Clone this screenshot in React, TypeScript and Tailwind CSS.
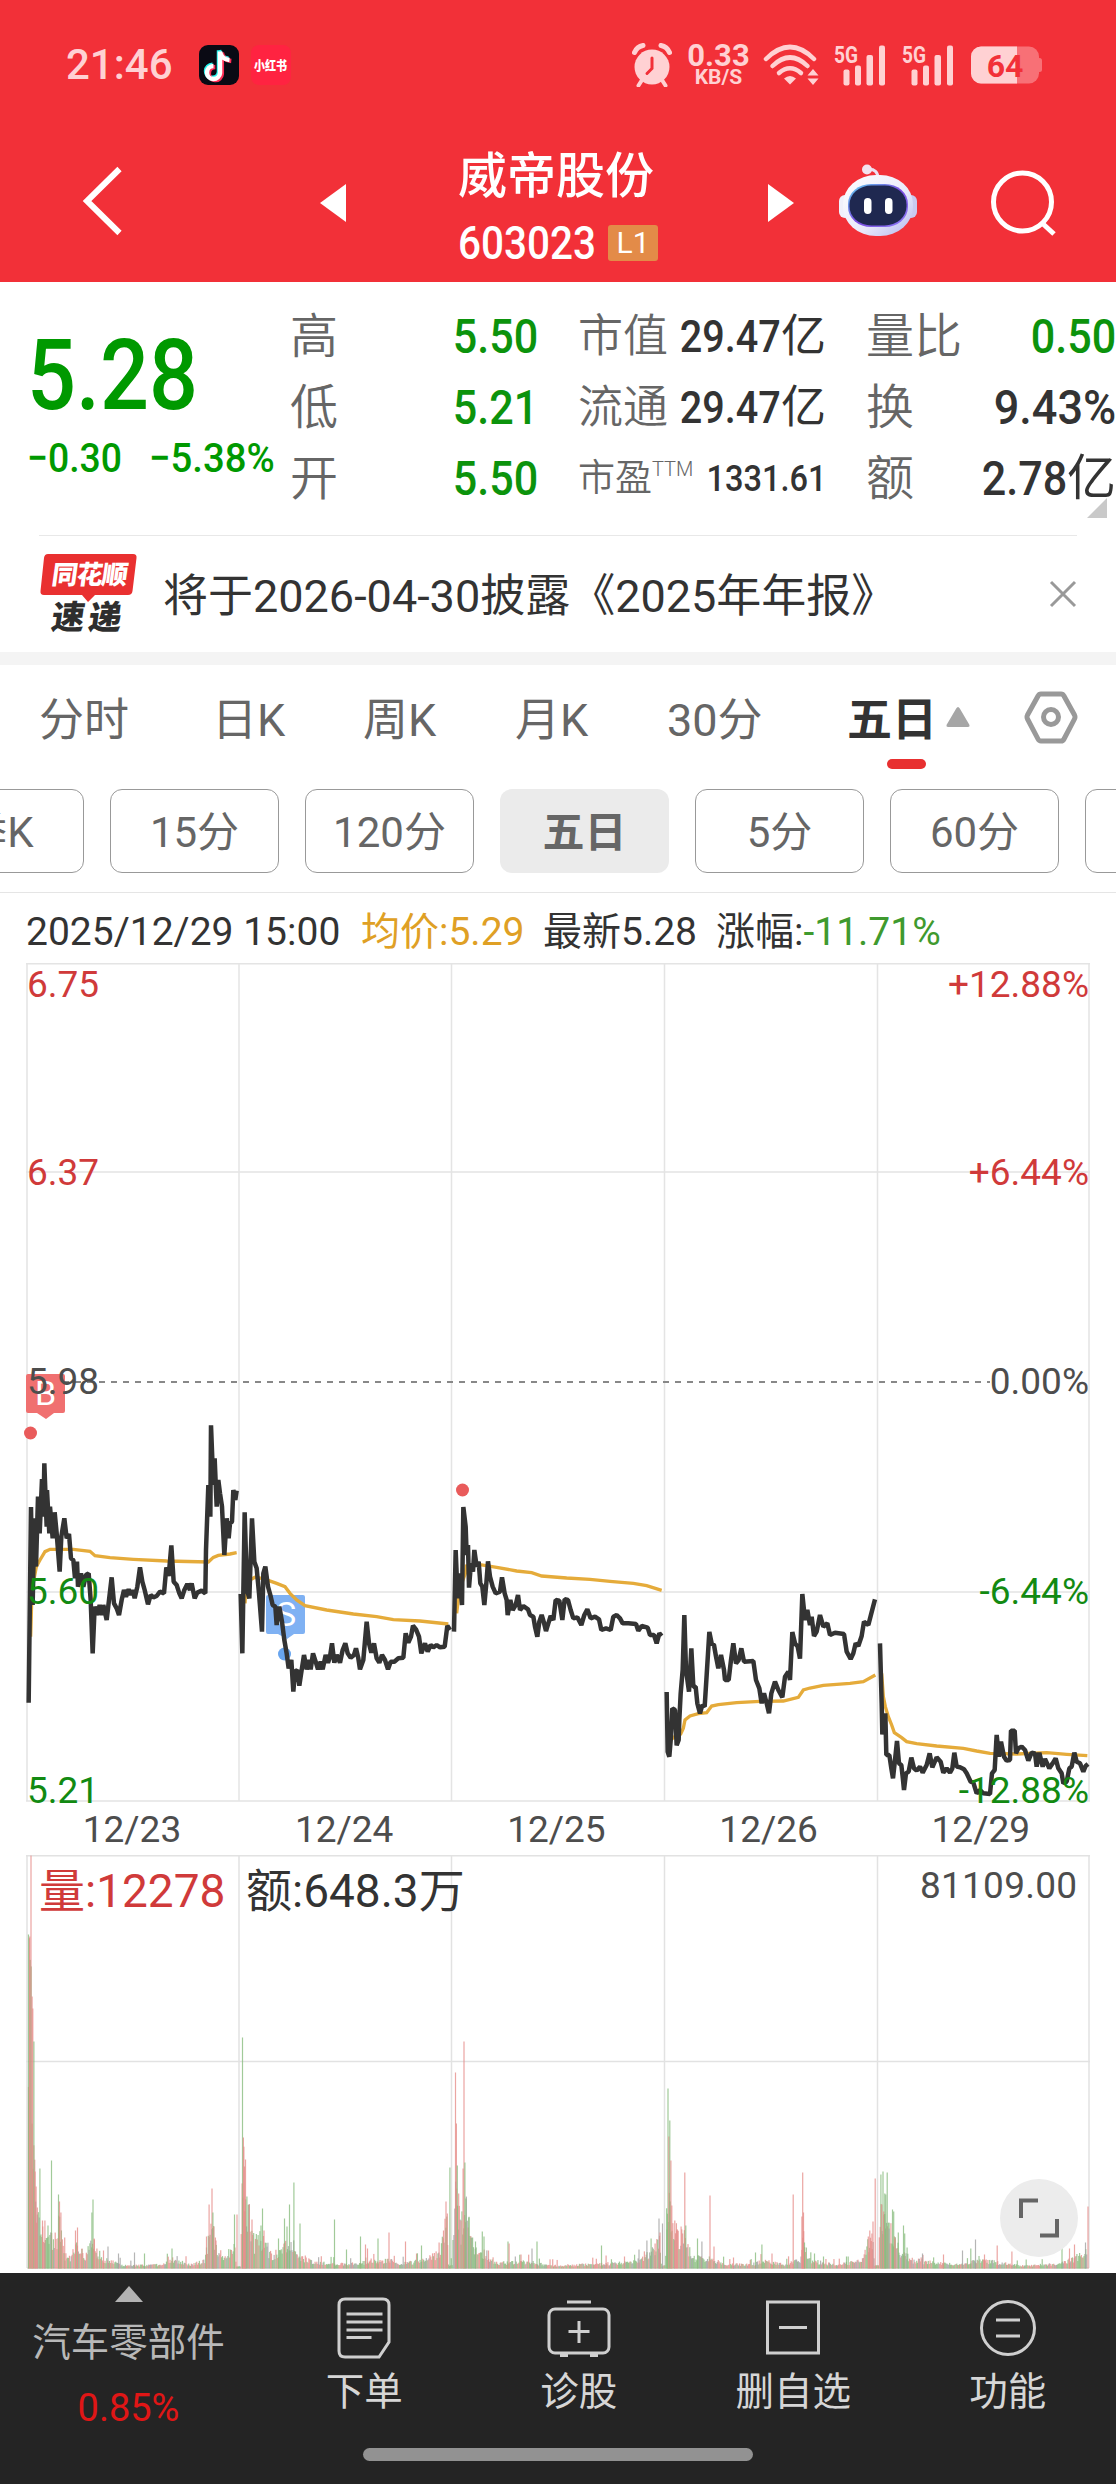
import React from 'react';

interface NumProps {
  children: React.ReactNode;
  className?: string;
}

// Narrow digits used by all quote figures
const Num: React.FC<NumProps> = ({ children, className = 'origin-right scale-x-[0.88]' }) => (
  <span className={`inline-block font-medium whitespace-nowrap ${className}`}>{children}</span>
);

const SignalIcon = () => (
  <svg width="52" height="42" viewBox="0 0 52 42" className="shrink-0 overflow-visible">
    <text x="0" y="18.500" fontFamily="Roboto" fontWeight="700" fontSize="24" textLength="24" lengthAdjust="spacingAndGlyphs" fill="#ffd1d3">5G</text>
    <g fill="#ffd1d3">
      <rect x="9.500" y="25.500" width="6" height="16" rx="2" />
      <rect x="21" y="21.500" width="6" height="20" rx="2" />
      <rect x="32.500" y="11" width="6.500" height="30.500" rx="2" />
      <rect x="45" y="1.500" width="6" height="40" rx="2" />
    </g>
  </svg>
);

const StatusBar = () => (
  <div className="flex h-[130px] items-center pl-[66px] pr-[73px] text-[#ffd1d3]">
    <span className="w-[133px] text-[42px] font-medium leading-none">21:46</span>
    <svg width="40" height="40" viewBox="0 0 40 40">
      <rect width="40" height="40" rx="9" fill="#0a0a14" />
      <g fill="none" strokeWidth="4.500">
        <path d="M20 6v21.500a6.500 6.500 0 1 1-6.500-7M20 6c.8 5 4 8 9.500 8.500" stroke="#25f4ee" transform="translate(0 -.8)" />
        <path d="M22 7v21.500a6.500 6.500 0 1 1-6.500-7M22 7c.8 5 4 8 9.500 8.500" stroke="#fe2c55" transform="translate(.8 .6)" />
        <path d="M21 6.500V28a6.500 6.500 0 1 1-6.500-7M21 6.500c.8 5 4 8 9.500 8.500" stroke="#fff" />
      </g>
    </svg>
    <div className="ml-3 flex h-10 w-10 items-center justify-center rounded-lg bg-[#ff2341]">
      <span className="scale-x-[0.85] whitespace-nowrap text-[13px] font-black leading-none text-white">小红书</span>
    </div>

    <div className="ml-auto flex items-center">
      <svg width="40" height="44" viewBox="0 0 40 44">
        <circle cx="20" cy="24" r="17.500" fill="#ffd1d3" />
        <path d="M2.500 9.500Q5 3.500 11 2.500M37.500 9.500Q35 3.500 29 2.500" stroke="#ffd1d3" strokeWidth="5" strokeLinecap="round" fill="none" />
        <path d="M10 37l-3.500 5.500M30 37l3.500 5.500" stroke="#ffd1d3" strokeWidth="4" strokeLinecap="round" />
        <path d="M20 15v10.500l-5 5" stroke="#f23038" strokeWidth="3" strokeLinecap="round" fill="none" />
      </svg>
      <div className="ml-4 flex w-[61px] flex-col items-center font-bold">
        <span className="text-[31px] leading-[24px]">0.33</span>
        <span className="mt-px text-[21px] leading-[17px]">KB/S</span>
      </div>
      <svg width="56" height="42" viewBox="0 0 56 42" className="ml-3.5">
        <g fill="none" stroke="#ffd1d3" strokeWidth="4.500" strokeLinecap="round">
          <path d="M3 15Q27 -9 51 15" />
          <path d="M9.500 22Q27 5 44.500 22" />
          <path d="M16 29Q27 19.500 38 29" />
        </g>
        <path d="M21 34.500q6-5 12 0l-6 6z" fill="#ffd1d3" />
        <path d="M44.500 31.500l5.500-6.500 5.500 6.500zM44.500 34.500h11L50 41z" fill="#ffd1d3" />
      </svg>
      <div className="ml-[15px] flex gap-4">
        <SignalIcon />
        <SignalIcon />
      </div>
      <svg width="72" height="40" viewBox="0 0 72 40" className="ml-[17px]">
        <rect x="0" y="1.500" width="68" height="37" rx="10" fill="#f87076" />
        <rect x="66" y="13" width="5" height="14" rx="2.500" fill="#f87076" />
        <path d="M10 1.500h36v37H10a10 10 0 0 1-10-10v-17a10 10 0 0 1 10-10z" fill="#ffd1d3" />
        <text x="34" y="31.500" fontFamily="Roboto" fontWeight="700" fontSize="32" textAnchor="middle" fill="#f23038">64</text>
      </svg>
    </div>
  </div>
);

const RobotIcon = () => (
  <svg width="80" height="74" viewBox="0 0 80 74">
    <defs>
      <linearGradient id="shell" x1="0" y1="0" x2="1" y2="1">
        <stop offset="0" stopColor="#ffffff" />
        <stop offset="0.6" stopColor="#e9e9fa" />
        <stop offset="1" stopColor="#b3b5ee" />
      </linearGradient>
      <linearGradient id="visor" x1="0" y1="0" x2="1" y2="1">
        <stop offset="0" stopColor="#5fd3f0" />
        <stop offset="0.5" stopColor="#7a4be0" />
        <stop offset="1" stopColor="#8a7af5" />
      </linearGradient>
    </defs>
    <path d="M29 5.500c8-1 11 3 11 9" stroke="#ecdff2" strokeWidth="3" fill="none" />
    <circle cx="29" cy="5.500" r="5" fill="#f3e2ee" />
    <rect x="1" y="31" width="12" height="23" rx="6" fill="#f0f0fb" />
    <rect x="67" y="31" width="12" height="23" rx="6" fill="#c9c9f0" />
    <rect x="5" y="11" width="70" height="61" rx="33" ry="29" fill="url(#shell)" />
    <rect x="10" y="20" width="60" height="43" rx="23" ry="20" fill="url(#visor)" />
    <rect x="11.500" y="21.500" width="57" height="40" rx="22" ry="19" fill="#1f2850" />
    <rect x="26" y="34" width="7.500" height="16" rx="3.700" fill="#fff" />
    <rect x="47" y="34" width="7.500" height="16" rx="3.700" fill="#fff" />
  </svg>
);

const TitleBar = () => (
  <div className="flex h-[152px] items-start text-white">
    <svg width="46" height="72" viewBox="0 0 46 72" className="ml-[80px] mt-[35px]">
      <path d="M39.500 4L7 36l32.500 32" stroke="#fff" strokeWidth="6" fill="none" />
    </svg>
    <svg width="26" height="38" viewBox="0 0 26 38" className="ml-[194px] mt-[54px]">
      <path d="M26 0v38L0 19z" fill="#fff" />
    </svg>
    <div className="ml-[107px] mt-[20px] flex w-[210px] flex-col items-center">
      <div className="pr-1 text-[49px] font-medium leading-[54px]">威帝股份</div>
      <div className="mt-[19px] flex w-full items-center pl-[5px]">
        <Num className="w-[150px] origin-left scale-x-[0.88] text-[46px] leading-[40px]">603023</Num>
        <span className="flex h-[36px] w-[50px] items-center justify-center rounded-[3px] bg-[#e38b48] text-[30px] leading-none">L1</span>
      </div>
    </div>
    <svg width="26" height="38" viewBox="0 0 26 38" className="ml-[105px] mt-[54px]">
      <path d="M0 0v38l26-19z" fill="#fff" />
    </svg>
    <div className="ml-[44px] mt-[34px]">
      <RobotIcon />
    </div>
    <svg width="70" height="70" viewBox="0 0 70 70" className="ml-[71px] mt-[38px]">
      <circle cx="33.500" cy="34" r="29" fill="none" stroke="#fff" strokeWidth="5" />
      <path d="M53 55l12 11" stroke="#fff" strokeWidth="5" />
    </svg>
  </div>
);

const Quote = () => (
  <div className="relative flex h-[253px] pt-[19px]">
    <div className="flex w-[290px] flex-col pl-[27px] text-[#009900]">
      <Num className="origin-left scale-x-[0.88] pt-[30px] text-[98px] leading-[90px]">5.28</Num>
      <div className="mt-[16px] flex text-[41px] leading-[42px]">
        <Num className="w-[122px] origin-left scale-x-[0.91]">−0.30</Num>
        <Num className="origin-left scale-x-[0.935]">−5.38%</Num>
      </div>
    </div>

    <div className="w-[248px] text-[48px] font-[350] leading-[71px] text-[#666]">
      {[
        ['高', '5.50'],
        ['低', '5.21'],
        ['开', '5.50'],
      ].map(([label, value]) => (
        <div key={label} className="flex h-[71px] justify-between">
          <span>{label}</span>
          <Num className="origin-right scale-x-[0.88] text-[49px] text-[#0c930c]">{value}</Num>
        </div>
      ))}
    </div>

    <div className="ml-[40px] w-[248px] whitespace-nowrap text-[45px] font-[350] leading-[71px] text-[#666]">
      {['市值', '流通'].map((label) => (
        <div key={label} className="flex h-[71px]">
          <span className="w-[90px] shrink-0">{label}</span>
          <span className="flex flex-1 justify-end text-[#333]">
            <Num className="-ml-4 origin-right scale-x-[0.88]">29.47</Num>
            <span className="font-normal">亿</span>
          </span>
        </div>
      ))}
      <div className="flex h-[71px] text-[37px]">
        <span className="w-[74px] shrink-0">市盈</span>
        <span className="-mt-[9px] w-[37px] shrink-0 text-[20px] font-light leading-[71px]">TTM</span>
        <span className="flex flex-1 justify-end">
          <Num className="-ml-6 origin-right scale-x-[0.88] text-[#333]">1331.61</Num>
        </span>
      </div>
    </div>

    <div className="ml-[40px] w-[250px] text-[48px] font-[350] leading-[71px] text-[#666]">
      <div className="flex h-[71px] justify-between">
        <span>量比</span>
        <Num className="origin-right scale-x-[0.88] text-[49px] text-[#0c930c]">0.50</Num>
      </div>
      <div className="flex h-[71px] justify-between">
        <span>换</span>
        <Num className="origin-right scale-x-[0.92] text-[49px] text-[#333]">9.43%</Num>
      </div>
      <div className="flex h-[71px] justify-between">
        <span>额</span>
        <span className="text-[49px] text-[#333]">
          <Num>2.78</Num>
          <span className="font-normal">亿</span>
        </span>
      </div>
    </div>
    <svg width="20" height="20" viewBox="0 0 20 20" className="absolute right-[9px] top-[216px]">
      <path d="M20 0v20H0z" fill="#c9c9c9" />
    </svg>
  </div>
);

const News = () => (
  <div className="mx-[39px] flex h-[117px] items-center border-t border-[#e8e8e8]">
    <svg width="98" height="82" viewBox="0 0 98 82">
      <path d="M9 1h85q4 0 3.500 4l-4 33q-.5 4-4.500 4H56l-7 7-6-7H5q-4 0-3.500-4L5 5q.5-4 4-4z" fill="#e93030" />
      <g fontFamily="'Noto Sans CJK SC', sans-serif" fontWeight="900" transform="skewX(-8)">
        <text x="16" y="31" fontSize="26" textLength="76" fill="#fff">同花顺</text>
        <text x="22" y="76" fontSize="33" textLength="70" fill="#2e2e2e">速递</text>
      </g>
    </svg>
    <span className="ml-[26px] mt-1 whitespace-nowrap text-[45px] leading-none text-[#333]">将于2026-04-30披露《2025年年报》</span>
    <svg width="28" height="28" viewBox="0 0 28 28" className="ml-auto shrink-0">
      <path d="M2 2l24 24M26 2L2 26" stroke="#999" strokeWidth="3" />
    </svg>
  </div>
);

const Tabs = () => (
  <div className="flex h-[124px] items-start pl-[39px] text-[45px] leading-[111px] text-[#666]">
    <span className="w-[173px]">分时</span>
    <span className="w-[151px]">日K</span>
    <span className="w-[152px]">周K</span>
    <span className="w-[152px]">月K</span>
    <span className="w-[180px]">30分</span>
    <div className="relative w-[98px] font-bold text-[#333]">
      五日
      <div className="absolute left-[40px] top-[94px] h-[10px] w-[39px] rounded-full bg-[#e83030]" />
    </div>
    <svg width="26" height="22" viewBox="0 0 26 22" className="mt-[41px]">
      <path d="M13 1q1 0 1.800 1.500L24.500 19q.5 2-1.500 2H3q-2 0-1.500-2l9.700-16.500Q12 1 13 1z" fill="#a6a6a6" />
    </svg>
    <svg width="54" height="54" viewBox="0 0 54 54" className="ml-[53px] mt-[25px]" fill="none" stroke="#999" strokeWidth="5">
      <path d="M17 4h20q2 0 3 2l10.500 19q1 2 0 4L40 49q-1 2-3 2H17q-2 0-3-2L3.500 29q-1-2 0-4L14 6q1-2 3-2z" />
      <circle cx="27" cy="27" r="7.500" />
    </svg>
  </div>
);

const chips = ['季K', '15分', '120分', '五日', '5分', '60分', ''];

const PeriodChips = () => (
  <div className="flex h-[104px] gap-[26px] overflow-hidden border-b border-[#e5e5e5]">
    {chips.map((chip, i) => (
      <div
        key={i}
        className={`flex h-[84px] w-[169px] shrink-0 items-center justify-center rounded-[12px] pt-[3px] text-[42px] text-[#666] ${
          i === 0 ? '-ml-[85px]' : ''
        } ${chip === '五日' ? 'bg-[#ebebeb] font-bold' : 'border border-[#999]'}`}
      >
        {chip}
      </div>
    ))}
  </div>
);

// One trace per trading day, in thirds of a pixel
const days = [
  {
    at: 'translate(0 397) scale(.33333)',
    avg: 'M92 830L96 690L109 620L120 600L135 575L150 568L220 568L270 574L285 587L330 593L400 598L500 603L625 606L640 592L655 586L690 582L710 578',
    price:
      'M86 1028L93 441L98 735L103 475L108 620L114 410L119 520L126 357L130 470L133 310L140 500L141 390L148 520L150 440L158 535L164 457L170 520L179 635L184 530L193 475L200 535L207 522L213 595L220 600L225 655L231 605L234 680L243 640L250 680L258 645L266 640L272 720L278 880L284 740L292 765L299 735L306 765L310 735L320 780L327 720L335 652L342 730L350 745L357 765L365 720L372 690L378 710L386 688L392 705L398 690L404 715L412 680L420 622L427 665L434 690L444 733L452 705L460 712L470 708L480 695L492 700L499 622L506 648L514 556L521 665L530 675L538 700L545 715L553 690L562 672L570 690L575 670L584 715L592 698L605 692L616 700L618 570L625 375L631 470L633 196L640 375L644 295L650 440L655 360L660 400L666 440L673 585L680 475L686 535L690 490L696 485L700 390L706 420L710 392',
  },
  {
    at: 'translate(0 397) scale(.33333)',
    avg: 'M735 730L740 665L765 652L790 656L830 670L855 680L870 700L890 720L915 737L980 750L1060 762L1130 770L1180 779L1260 783L1345 792',
    price:
      'M722 702L727 880L734 457L741 690L748 715L756 475L763 605L770 625L777 700L786 815L790 640L796 620L804 680L811 705L818 735L826 740L830 795L838 740L846 785L853 840L860 880L866 925L874 900L880 995L885 935L892 930L898 977L905 930L912 885L920 928L927 900L932 928L939 880L947 905L954 928L962 905L968 928L977 885L984 908L990 890L996 850L1003 908L1010 885L1020 908L1028 870L1036 850L1043 880L1052 893L1062 885L1068 865L1075 895L1080 928L1090 900L1100 785L1107 850L1114 878L1122 850L1130 895L1138 908L1146 885L1155 900L1164 928L1172 905L1183 905L1195 895L1210 893L1217 820L1225 848L1233 830L1239 797L1248 808L1257 830L1264 880L1275 850L1283 875L1292 855L1300 862L1310 855L1320 862L1334 860L1342 797L1350 810',
  },
  {
    at: 'translate(400 397) scale(.33333)',
    avg: 'M170 760L178 690L196 640L199 618L240 614L290 622L350 633L395 638L425 648L500 654L570 658L630 664L700 670L740 677L785 691',
    price:
      'M162 815L167 570L173 715L178 640L186 735L190 441L197 500L200 585L204 555L207 683L213 610L219 635L223 570L230 620L236 605L241 670L247 680L253 735L259 670L264 604L270 650L278 680L287 700L300 695L306 652L314 700L320 720L323 765L331 720L338 750L347 735L354 705L360 750L370 738L384 748L390 765L400 770L405 800L412 830L418 785L425 765L431 785L438 813L445 790L452 768L460 780L467 720L478 722L487 780L494 718L504 720L512 750L520 775L532 772L544 795L553 765L562 748L572 775L585 770L597 778L604 810L618 805L632 810L640 770L650 765L660 775L668 790L685 790L708 792L715 812L725 798L743 803L750 825L762 825L770 850L778 820L785 828',
  },
  {
    at: 'translate(650 597) scale(.33333)',
    avg: 'M56 500L68 535L92 522L100 505L105 480L120 468L145 461L170 458L185 438L205 434L260 428L330 424L400 423L445 412L460 390L480 384L520 376L600 370L640 365L676 345',
    price:
      'M50 396L53 575L58 590L63 530L67 445L75 450L80 556L86 540L88 480L92 400L98 330L103 165L108 330L117 395L124 265L130 380L137 380L142 430L150 460L157 435L164 440L170 345L178 216L185 250L192 255L198 290L205 325L213 285L222 330L225 360L236 360L243 300L250 250L258 310L266 300L274 265L282 305L310 303L318 360L328 385L335 430L342 400L350 430L357 460L364 400L375 365L385 390L397 412L405 350L415 335L420 360L427 216L435 250L443 260L450 296L457 102L465 180L472 150L480 195L485 170L492 228L500 215L510 165L520 200L532 190L540 225L555 218L582 222L590 275L602 297L610 280L617 250L625 258L635 228L642 185L655 195L664 160L675 118',
  },
  {
    at: 'translate(650 597) scale(.33333)',
    avg: 'M695 340L700 410L706 440L715 470L725 495L733 518L755 533L770 545L800 551L860 558L940 565L980 573L1020 580L1100 582L1190 578L1250 583L1312 587',
    price:
      'M690 250L695 430L697 523L706 460L709 585L718 585L724 625L729 655L735 600L741 543L747 610L754 615L758 650L762 690L768 640L776 635L784 593L792 625L800 632L810 620L818 638L830 615L839 580L847 622L860 592L872 605L880 638L890 625L900 638L907 625L913 578L920 620L930 622L942 628L950 640L962 665L970 668L980 700L990 690L1000 700L1020 702L1026 640L1034 630L1040 525L1047 590L1053 545L1062 590L1070 602L1080 600L1083 512L1094 512L1098 580L1105 565L1115 560L1125 570L1135 602L1145 578L1155 580L1160 620L1168 578L1178 620L1185 597L1198 625L1208 610L1217 595L1225 625L1235 640L1240 670L1250 665L1258 625L1265 620L1273 578L1280 605L1290 610L1300 635L1307 618L1314 612',
  },
];

const dates = ['12/23', '12/24', '12/25', '12/26', '12/29'];
const gridX = [239, 451.5, 664.5, 877.5];

const levels = [
  { y: 33.5, price: '6.75', pct: '+12.88%', color: '#d03a3a' },
  { y: 221.5, price: '6.37', pct: '+6.44%', color: '#d03a3a' },
  { y: 431, price: '5.98', pct: '0.00%', color: '#4d4d4d' },
  { y: 641, price: '5.60', pct: '-6.44%', color: '#128a12' },
  { y: 840, price: '5.21', pct: '-12.88%', color: '#128a12' },
];

const PriceChart = () => (
  <svg width="1116" height="892" viewBox="0 0 1116 892" className="block" fontFamily="Roboto, sans-serif">
    <g stroke="#e4e4e4" strokeWidth="1.500" fill="none">
      <path d="M26 .8H1090M26 209H1090M26 629H1090M26 838H1090" />
      <path d="M27 0V838M1089 0V838" />
      {gridX.map((x) => (
        <path key={x} d={`M${x} 0V838`} />
      ))}
    </g>
    <path d="M27 419H990" stroke="#888" strokeWidth="1.800" strokeDasharray="6 6" />

    <path d="M28 411h35a2 2 0 0 1 2 2v35a2 2 0 0 1-2 2h-9l-8 6-9-6h-9a2 2 0 0 1-2-2v-35a2 2 0 0 1 2-2z" fill="#f07070" />
    <text x="45.500" y="441.500" fontSize="34" textAnchor="middle" fill="#fff">B</text>
    <path d="M268 632h35a2 2 0 0 1 2 2v35a2 2 0 0 1-2 2h-9l-7 5-9-5h-10a2 2 0 0 1-2-2v-35a2 2 0 0 1 2-2z" fill="#7fb1f3" />
    <text x="286" y="663" fontSize="34" textAnchor="middle" fill="#fff">S</text>
    <circle cx="284.500" cy="691" r="6.500" fill="#68a5ef" />
    <circle cx="30.500" cy="470" r="6.500" fill="#e95b5b" />
    <circle cx="462.500" cy="527" r="6.500" fill="#e95b5b" />

    {days.map((day, i) => (
      <g key={i} transform={day.at} fill="none">
        <path d={day.avg} stroke="#e5ab3a" strokeWidth="10" />
        <path d={day.price} stroke="#333" strokeWidth="13.500" strokeLinejoin="bevel" />
      </g>
    ))}

    {levels.map((l) => (
      <g key={l.price} fontSize="37" fill={l.color}>
        <text x="27" y={l.y}>{l.price}</text>
        <text x="1089" y={l.y} textAnchor="end">{l.pct}</text>
      </g>
    ))}
    {dates.map((d, i) => (
      <text key={d} x={132 + i * 212.2} y="879" fontSize="37" textAnchor="middle" fill="#4d4d4d">{d}</text>
    ))}
  </svg>
);

type Color = 'r' | 'g' | 'n';

const fills: Record<Color, string> = { r: '#e58c88', g: '#86bb7c', n: '#a0a0a0' };

// Background turnover level: [x, height]
const envelope: [number, number][] = [
  [28, 330], [31, 260], [33, 150], [35, 85], [38, 50], [46, 38], [55, 25], [59, 52], [64, 14], [70, 10], [77, 30], [84, 9],
  [90, 26], [94, 26], [98, 10], [110, 8], [122, 3], [160, 4], [172, 10], [190, 4], [204, 8], [211, 50], [217, 14], [224, 10], [234, 24],
  [236, 2], [240, 2], [241, 60], [243, 110], [247, 64], [254, 26], [262, 32], [270, 12], [288, 26], [300, 12], [312, 7], [335, 5], [360, 6],
  [388, 9], [400, 5], [425, 9], [440, 18], [446, 55], [448, 4], [452, 4], [453, 55], [456, 90], [460, 38], [464, 70], [470, 32], [480, 14],
  [495, 6], [530, 7], [550, 3], [600, 5], [635, 7], [655, 20], [659, 36], [661, 3], [665, 3], [667, 90], [671, 60], [678, 32], [685, 34],
  [690, 12], [712, 10], [722, 5], [750, 4], [763, 8], [785, 4], [800, 10], [803, 34], [808, 9], [835, 4], [860, 8], [872, 36], [874, 3],
  [878, 3], [880, 60], [886, 55], [892, 32], [900, 18], [912, 9], [935, 6], [960, 4], [980, 9], [1000, 6], [1020, 3], [1060, 5], [1080, 14], [1087, 20],
];

const spikes: [number, number, Color][] = [
  [28, 334, 'g'], [29.3, 332, 'r'], [30.5, 413, 'r'], [31.6, 272, 'r'], [32.3, 260, 'r'], [33.4, 227, 'g'], [34.6, 97, 'r'], [35.6, 82, 'r'],
  [36.8, 61, 'r'], [39.4, 100, 'g'], [42, 48, 'r'], [44.4, 48, 'r'], [47.5, 43, 'g'], [51, 108, 'g'], [58, 74, 'g'], [59, 67, 'r'], [60.4, 56, 'r'],
  [64.2, 31, 'r'], [75, 38, 'r'], [77, 41, 'r'], [81.5, 20, 'r'], [91.4, 56, 'g'], [92.5, 69, 'g'], [93.6, 30, 'r'], [96.4, 20, 'r'], [103, 18, 'r'],
  [107.5, 22, 'n'], [118, 15, 'n'], [134, 16, 'n'], [144, 15, 'g'], [171.5, 20, 'g'], [206, 32, 'r'], [208.6, 64, 'r'], [211.5, 80, 'r'], [212.4, 56, 'g'],
  [213.4, 42, 'r'], [215.5, 28, 'r'], [234, 54, 'g'], [236.5, 54, 'r'],
  [242, 231, 'g'], [242.9, 131, 'r'], [244, 102, 'r'], [245, 109, 'r'], [246.4, 72, 'g'], [248.8, 64, 'r'], [251.5, 49, 'r'], [262, 60, 'g'], [260.5, 43, 'g'],
  [263.5, 38, 'r'], [278, 30, 'g'], [284, 50, 'g'], [286.5, 42, 'g'], [289, 64, 'g'], [293.4, 86, 'g'], [299.5, 45, 'g'], [334, 49, 'g'], [346, 19, 'g'],
  [360, 32, 'g'], [365, 24, 'r'], [367, 20, 'r'], [377.5, 30, 'g'], [388.5, 36, 'r'], [405, 27, 'r'], [421, 23, 'g'], [438.6, 26, 'r'], [443, 38, 'r'],
  [445.5, 67, 'r'], [446.8, 55, 'r'], [449.4, 101, 'g'],
  [455, 196, 'r'], [455.9, 145, 'r'], [456.8, 103, 'g'], [458.2, 75, 'r'], [460.6, 48, 'r'], [462.6, 100, 'r'], [463.5, 227, 'r'], [464.4, 106, 'g'],
  [465.4, 70, 'g'], [468.3, 51, 'g'], [470.5, 31, 'g'], [475, 27, 'g'], [481.8, 37, 'g'], [483.5, 32, 'g'], [488, 18, 'r'], [507.5, 27, 'g'], [508.6, 25, 'r'],
  [520.5, 14, 'r'], [531.5, 20, 'n'], [536.5, 27, 'g'], [601, 23, 'g'], [605.6, 13, 'r'], [624, 12, 'r'], [638.5, 19, 'n'], [646.4, 28, 'n'], [650.6, 30, 'g'],
  [654.6, 25, 'r'], [658.5, 50, 'n'], [659.5, 36, 'r'], [662, 45, 'n'],
  [666.6, 39, 'g'], [667.5, 180, 'g'], [668.4, 132, 'r'], [669.3, 148, 'g'], [670.4, 108, 'r'], [671.3, 63, 'r'], [674.3, 48, 'r'], [676.5, 38, 'r'],
  [680.6, 42, 'r'], [684.3, 96, 'r'], [685.3, 43, 'g'], [697, 30, 'g'], [701.4, 27, 'n'], [709.5, 73, 'r'], [713.5, 22, 'r'], [733, 11, 'r'], [755, 16, 'g'],
  [761.4, 24, 'g'], [771.5, 15, 'r'], [792.7, 74, 'r'], [801.4, 52, 'r'], [802.2, 96, 'r'], [803, 56, 'r'], [804, 26, 'g'], [814, 15, 'g'], [823, 12, 'g'],
  [846, 12, 'g'], [867.8, 32, 'r'], [869.3, 38, 'r'], [871.4, 35, 'r'], [872.5, 47, 'r'], [874.7, 90, 'r'],
  [880.4, 94, 'g'], [881.4, 64, 'r'], [882.5, 97, 'g'], [883.3, 57, 'r'], [884.3, 75, 'g'], [885.3, 74, 'g'], [886.7, 96, 'g'], [888.5, 40, 'n'], [892, 59, 'g'],
  [893.2, 57, 'g'], [894.6, 30, 'r'], [897.8, 36, 'g'], [903, 43, 'g'], [904.2, 35, 'g'], [906.6, 21, 'g'], [922, 15, 'n'], [943, 14, 'r'], [962, 18, 'n'],
  [970.3, 20, 'g'], [975, 29, 'n'], [984, 14, 'r'], [996.7, 23, 'r'], [1011.4, 17, 'r'], [1061.5, 24, 'g'], [1069, 20, 'r'], [1074, 24, 'r'],
  [1085, 26, 'n'], [1087.5, 62, 'r'],
];

function level(x: number) {
  const i = envelope.findIndex(([ex]) => ex >= x);
  if (i <= 0) return envelope[0][1];
  const [x0, h0] = envelope[i - 1];
  const [x1, h1] = envelope[i];
  return h0 + ((h1 - h0) * (x - x0)) / (x1 - x0);
}

function volumeBars() {
  const out: [number, number, Color][] = [];
  let seed = 17;
  const rnd = () => {
    seed = (seed * 16807) % 2147483647;
    return seed / 2147483647;
  };
  for (let x = 28; x < 1087; x += 0.89) {
    const h = level(x) * (0.55 + 0.65 * rnd());
    const c = rnd();
    out.push([x, Math.max(2, h + (rnd() > 0.93 ? 6 : 0)), c < 0.42 ? 'r' : c < 0.82 ? 'g' : 'n']);
  }
  return out.concat(spikes);
}

const bars = volumeBars();

const VolumeChart = () => (
  <div className="relative h-[418px]">
    <svg width="1116" height="418" viewBox="0 0 1116 418" className="block" fontFamily="Roboto, 'Noto Sans CJK SC', sans-serif">
      <path d="M26 .8H1090M26 206.500H1090M27 0V413M1089 0V413" stroke="#e2e2e2" strokeWidth="1.500" />
      {gridX.map((x) => (
        <path key={x} d={`M${x} 0V413`} stroke="#e2e2e2" strokeWidth="1.500" />
      ))}
      <path d="M27 413H1089" stroke="#d5d5d0" strokeWidth="1" />
      {bars.map(([x, h, c], i) => (
        <rect key={i} x={x - 0.1} y={413.5 - h} width="1.200" height={h} fill={fills[c]} fillOpacity="0.78" />
      ))}
      <text x="39" y="52" fontSize="46" fill="#d03a3a">量:12278</text>
      <text x="246" y="52" fontSize="46" fill="#333">额:648.3万</text>
      <text x="1077" y="43" fontSize="37" textLength="157" textAnchor="end" fill="#4d4d4d">81109.00</text>
    </svg>
    <button className="absolute right-[38px] top-[324px] flex h-[78px] w-[78px] items-center justify-center rounded-full bg-[#ececec]">
      <svg width="40" height="40" viewBox="0 0 40 40" fill="none" stroke="#666" strokeWidth="4">
        <path d="M2 20V2.500h17M38 21v16.500H21" />
      </svg>
    </button>
  </div>
);

const navItems = [
  {
    label: '下单',
    icon: (
      <>
        <path d="M8 2h38q6 0 6 6v37L42 60H8q-6 0-6-6V8q0-6 6-6z" />
        <path d="M9.500 17h36M9.500 25h36M9.500 33h36M9.500 40.500h25" />
      </>
    ),
  },
  {
    label: '诊股',
    icon: (
      <>
        <rect x="-3" y="12" width="60" height="44" rx="6" />
        <path d="M15 5h24M8 58.500h8M38 58.500h8M27 24v22M16.500 34.500h21" />
      </>
    ),
  },
  {
    label: '删自选',
    icon: (
      <>
        <rect x="1.500" y="5" width="51" height="51" />
        <path d="M13 30.500h28" />
      </>
    ),
  },
  {
    label: '功能',
    icon: (
      <>
        <circle cx="27" cy="31" r="26.500" />
        <path d="M15 23h24M15 39h24" />
      </>
    ),
  },
];

const BottomNav = () => (
  <div className="flex h-[211px] flex-col items-center bg-[#242424] text-[38.500px] text-[#d6d6d6]">
    <div className="flex h-[175px] w-full">
      <div className="flex w-[257px] shrink-0 flex-col items-center text-[#b8b8b8]">
        <svg width="28" height="16" viewBox="0 0 28 16" className="mt-[13px]">
          <path d="M14 0l14 16H0z" fill="#b3b3b3" />
        </svg>
        <span className="mt-[16px] leading-[50px]">汽车零部件</span>
        <span className="mt-[15px] text-[38px] leading-[50px] text-[#e01616]">0.85%</span>
      </div>
      {navItems.map(({ label, icon }) => (
        <div key={label} className="flex w-[214.500px] flex-col items-center">
          <svg width="54" height="62" viewBox="0 0 54 62" className="mt-[24px] overflow-visible" fill="none" stroke="#cfcfcf" strokeWidth="3">
            {icon}
          </svg>
          <span className="mt-[8px] leading-[50px]">{label}</span>
        </div>
      ))}
    </div>
    <div className="h-[13px] w-[390px] rounded-full bg-[#929292]" />
  </div>
);

export default function App() {
  return (
    <div className="h-[2484px] w-[1116px] overflow-hidden bg-white font-['Roboto','Noto_Sans_CJK_SC',sans-serif]">
      <div className="bg-[#f23038]">
        <StatusBar />
        <TitleBar />
      </div>
      <Quote />
      <News />
      <div className="h-[13px] bg-[#f4f4f4]" />
      <Tabs />
      <PeriodChips />
      <div className="flex h-[70px] items-center whitespace-pre pl-[26px] pt-[9px] text-[39px] leading-none text-[#333]">
        <span className="w-[335px]">2025/12/29 15:00</span>
        <span className="w-[182px] text-[#dfa025]">均价:5.29</span>
        <span className="w-[173px]">最新5.28</span>
        <span>涨幅:</span>
        <span className="text-[#3f9a2e]">-11.71%</span>
      </div>
      <PriceChart />
      <VolumeChart />
      <BottomNav />
    </div>
  );
}
